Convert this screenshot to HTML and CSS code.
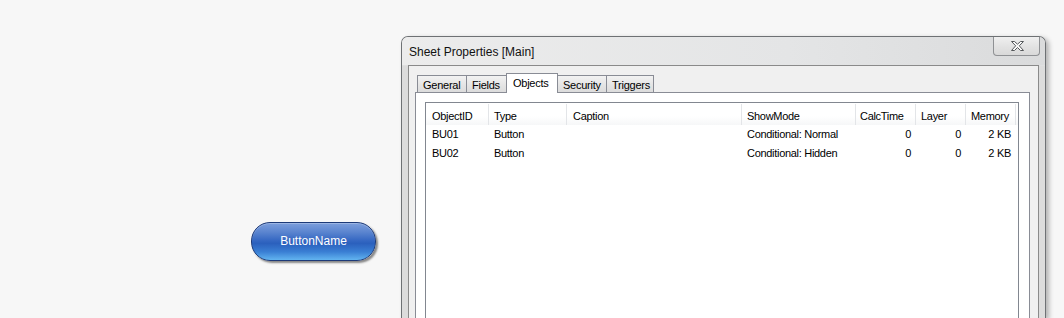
FILE: index.html
```html
<!DOCTYPE html>
<html>
<head>
<meta charset="utf-8">
<link rel="stylesheet" href="styles.css">
</head>
<body>
<div class="canvas">
  <div class="qv-btn">ButtonName</div>
  <div class="window">
    <div class="titlebar">
      <span class="title">Sheet Properties [Main]</span>
      <div class="close">
        <svg width="13" height="10" viewBox="0 0 13 10"><polygon points="0.5,0.5 3.5,0.5 6.5,3.2 9.5,0.5 12.5,0.5 8.3,4.8 12.5,9.5 9.5,9.5 6.5,6.5 3.5,9.5 0.5,9.5 4.7,4.8" fill="#fafafa" stroke="#55585b" stroke-width="1" stroke-linejoin="round"/></svg>
      </div>
    </div>
    <div class="client">
      <div class="tabs">
        <div class="tab t-general">General</div>
        <div class="tab t-fields">Fields</div>
        <div class="tab active t-objects">Objects</div>
        <div class="tab t-security">Security</div>
        <div class="tab t-triggers">Triggers</div>
      </div>
      <div class="panel">
        <div class="list">
          <div class="row head">
            <div class="c">ObjectID</div>
            <div class="c">Type</div>
            <div class="c">Caption</div>
            <div class="c">ShowMode</div>
            <div class="c">CalcTime</div>
            <div class="c">Layer</div>
            <div class="c">Memory</div>
            <div class="c last"></div>
          </div>
          <div class="row">
            <div class="c">BU01</div>
            <div class="c">Button</div>
            <div class="c"></div>
            <div class="c">Conditional: Normal</div>
            <div class="c num">0</div>
            <div class="c num">0</div>
            <div class="c num">2 KB</div>
            <div class="c last"></div>
          </div>
          <div class="row">
            <div class="c">BU02</div>
            <div class="c">Button</div>
            <div class="c"></div>
            <div class="c">Conditional: Hidden</div>
            <div class="c num">0</div>
            <div class="c num">0</div>
            <div class="c num">2 KB</div>
            <div class="c last"></div>
          </div>
        </div>
      </div>
    </div>
  </div>
</div>
</body>
</html>
```

FILE: styles.css
```css
html, body {
  margin: 0;
  padding: 0;
  background: #f7f7f7;
  font-family: "Liberation Sans", Arial, sans-serif;
  overflow: hidden;
}

.canvas {
  position: relative;
  width: 1064px;
  height: 318px;
  background: #f7f7f7;
  overflow: hidden;
}

/* QlikView style button */
.qv-btn {
  position: absolute;
  left: 251px;
  top: 222px;
  width: 123px;
  height: 36px;
  border: 1px solid #1d3a78;
  border-radius: 19px;
  background: linear-gradient(to bottom,
    #7d9fdc 0%,
    #5a84cf 25%,
    #3467c2 48%,
    #2b60bd 55%,
    #3a7fd4 78%,
    #62b4f0 100%);
  box-shadow: 2px 2px 2px rgba(0, 0, 0, 0.45), inset 0 1px 0 rgba(255,255,255,0.25);
  color: #ffffff;
  font-size: 12px;
  display: flex;
  align-items: center;
  justify-content: center;
  padding-bottom: 1px;
  box-sizing: content-box;
}

/* Dialog window */
.window {
  position: absolute;
  left: 401px;
  top: 36px;
  width: 631px;
  height: 281px;
  padding: 0 6px;
  border: 1px solid #6e7174;
  border-bottom: none;
  border-radius: 7px 7px 0 0;
  background: linear-gradient(to bottom, #eaeaea 0px, #e2e3e4 28px, #dcdcdc 29px, #dcdcdc 100%);
  box-shadow: 3px 2px 5px rgba(0, 0, 0, 0.28);
  display: flex;
  flex-direction: column;
}

.titlebar {
  height: 28px;
  display: flex;
  justify-content: space-between;
  align-items: flex-start;
  background: linear-gradient(to right, #ececec, #e4e5e6 60%, #dadbdc);
  margin: 0 -6px;
  padding: 0 5px 0 7px;
  border-radius: 6px 6px 0 0;
}

.title {
  font-size: 12px;
  color: #111;
  line-height: 14px;
  margin-top: 8px;
}

.close {
  width: 45px;
  height: 18px;
  border: 1px solid #8f9194;
  border-top: none;
  border-radius: 0 0 4px 4px;
  background: linear-gradient(to bottom, #f0f0f0, #e3e3e3 50%, #d9d9d9);
  display: flex;
  align-items: center;
  justify-content: center;
}

.close svg {
  margin-left: 1px;
}

.client {
  flex: 1;
  border: 1px solid #8a8a8a;
  border-bottom: none;
  background: #f0f0f0;
  padding: 7px 8px 0 6px;
  display: flex;
  flex-direction: column;
}

.tabs {
  height: 20px;
  display: flex;
  align-items: flex-end;
  padding-left: 2px;
  position: relative;
  z-index: 2;
}

.tab {
  box-sizing: border-box;
  height: 17px;
  margin-bottom: 1px;
  border: 1px solid #898c95;
  border-bottom: none;
  background: linear-gradient(to bottom, #f2f2f2, #e6e6e6 50%, #dcdcdc);
  font-size: 11px;
  letter-spacing: -0.25px;
  color: #000;
  line-height: 18px;
  padding-left: 5px;
  margin-left: -1px;
}

.tab:first-child { margin-left: 0; }

.t-general { width: 50px; }
.t-fields { width: 41px; }
.t-objects { width: 52px; }
.t-security { width: 50px; }
.t-triggers { width: 48px; }

.tab.active {
  height: 20px;
  margin-bottom: 0;
  background: #ffffff;
  line-height: 18px;
  padding-left: 6px;
  position: relative;
  z-index: 3;
}

.panel {
  flex: 1;
  margin-top: -1px;
  border: 1px solid #898c95;
  border-bottom: none;
  background: #ffffff;
  padding: 9px 10px 0 9px;
  position: relative;
  z-index: 1;
  display: flex;
  flex-direction: column;
}

.list {
  flex: 1;
  border: 1px solid #828790;
  border-bottom: none;
  background: #ffffff;
  font-size: 11px;
  letter-spacing: -0.3px;
  color: #000;
}

.row {
  display: grid;
  grid-template-columns: 63px 78px 175px 114px 60px 50px 50px 1fr;
  height: 19px;
  line-height: 19px;
}

.row .c {
  padding-left: 6px;
  white-space: nowrap;
  overflow: hidden;
}

.row .c.num {
  text-align: right;
  padding-left: 0;
  padding-right: 5px;
}

.row .c:nth-child(2),
.row .c:nth-child(4),
.row .c:nth-child(6),
.row .c:nth-child(7) {
  padding-left: 5px;
}

.row .c:nth-child(5) { padding-left: 4px; }

.row.head {
  height: 22px;
  line-height: 22px;
  background: linear-gradient(to bottom, #ffffff, #ffffff 60%, #f6f7f8);
}

.row.head .c {
  border-right: 1px solid #e3e5e8;
  margin-top: 1px;
  line-height: 24px;
  height: 21px;
}

.row.head .c.last { border-right: none; }

.row .c.last { padding: 0; }
```
